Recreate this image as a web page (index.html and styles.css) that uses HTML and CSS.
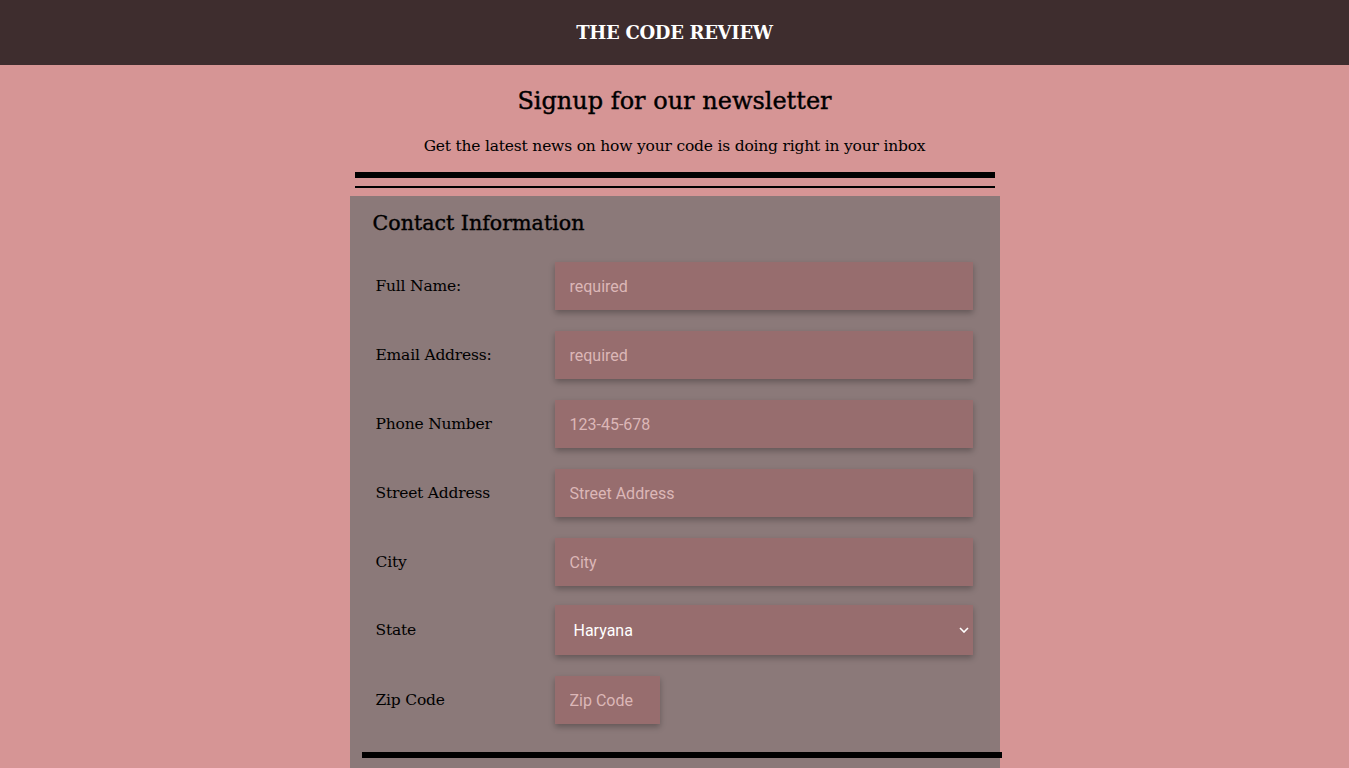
FILE: index.html
```html
<!DOCTYPE html>
<html lang="en">
<head>
<meta charset="utf-8">
<title>The Code Review</title>
<link rel="stylesheet" href="styles.css">
</head>
<body>
<header class="topbar">
  <div class="brand">THE CODE REVIEW</div>
</header>
<main class="page">
  <h1 class="title">Signup for our newsletter</h1>
  <p class="lead">Get the latest news on how your code is doing right in your inbox</p>
  <div class="rule-thick"></div>
  <div class="rule-thin"></div>
  <form class="card">
    <h2 class="card-title">Contact Information</h2>
    <div class="rows">
      <div class="row"><label class="lbl">Full Name:</label><input class="field" type="text" placeholder="required"></div>
      <div class="row"><label class="lbl">Email Address:</label><input class="field" type="email" placeholder="required"></div>
      <div class="row"><label class="lbl">Phone Number</label><input class="field" type="tel" placeholder="123-45-678"></div>
      <div class="row"><label class="lbl">Street Address</label><input class="field" type="text" placeholder="Street Address"></div>
      <div class="row"><label class="lbl">City</label><input class="field" type="text" placeholder="City"></div>
      <div class="row row-select"><label class="lbl">State</label>
        <div class="select-wrap">
          <select class="field select"><option>Haryana</option></select>
          <svg class="caret" width="10" height="6" viewBox="0 0 10 6"><path d="M1 1l4 4 4-4" fill="none" stroke="#fff" stroke-width="1.6"/></svg>
        </div>
      </div>
      <div class="row"><label class="lbl">Zip Code</label><input class="field zip" type="text" placeholder="Zip Code"></div>
    </div>
    <div class="rule-bottom"></div>
  </form>
</main>
</body>
</html>
```
FILE: styles.css
```css
* { box-sizing: border-box; }
html, body { margin: 0; padding: 0; }
body {
  background: #d69595;
  font-family: "DejaVu Serif", "Liberation Serif", serif;
  color: #000;
  overflow: hidden;
}
.topbar {
  height: 65px;
  background: #3e2d2e;
  display: flex;
  align-items: center;
  justify-content: center;
}
.brand {
  color: #fff;
  font-size: 18px;
  font-weight: bold;
  letter-spacing: -0.3px;
  padding-bottom: 1px;
}
.page {
  display: flex;
  flex-direction: column;
  align-items: center;
}
.title {
  margin: 21px 0 0;
  font-size: 24px;
  line-height: 30px;
  font-weight: normal;
  -webkit-text-stroke: 0.4px #000;
}
.lead {
  margin: 19px 0 0;
  font-size: 15.5px;
  line-height: 22px;
  letter-spacing: -0.2px;
}
.rule-thick {
  width: 640px;
  height: 6px;
  background: #000;
  margin-top: 15px;
}
.rule-thin {
  width: 640px;
  height: 2px;
  background: #000;
  margin-top: 8px;
}
.card {
  width: 650px;
  background: #8b7979;
  margin-top: 8px;
  padding: 12px 0 0 0;
  height: 600px;
}
.card-title {
  margin: 0 0 0 23px;
  font-size: 20.6px;
  line-height: 30px;
  font-weight: normal;
  -webkit-text-stroke: 0.4px #000;
}
.rows {
  display: flex;
  flex-direction: column;
  gap: 21px;
  margin-top: 24px;
  padding-left: 26px;
}
.row {
  display: flex;
  align-items: center;
  height: 48px;
}
.row-select { height: 50px; margin-top: -2px; }
.lbl {
  width: 179px;
  font-size: 15.5px;
  letter-spacing: -0.2px;
}
.field {
  width: 418px;
  height: 48px;
  border: none;
  outline: none;
  background: #976d6e;
  box-shadow: 0 3px 6px rgba(0, 0, 0, 0.28);
  padding: 0 15px;
  font-family: "Liberation Sans Narrow", "Roboto", sans-serif;
  font-size: 16px;
  color: #fff;
}
.field::placeholder { color: #dcb7b7; opacity: 1; }
.zip { width: 105px; }
.select-wrap {
  position: relative;
  width: 418px;
  height: 50px;
}
.select {
  height: 50px;
  appearance: none;
  -webkit-appearance: none;
  padding-left: 19px;
  color: #fff;
}
.caret {
  position: absolute;
  right: 4px;
  top: 22px;
  pointer-events: none;
}
.rule-bottom {
  width: 640px;
  height: 6px;
  background: #000;
  margin: 28px 0 0 12px;
}
```
